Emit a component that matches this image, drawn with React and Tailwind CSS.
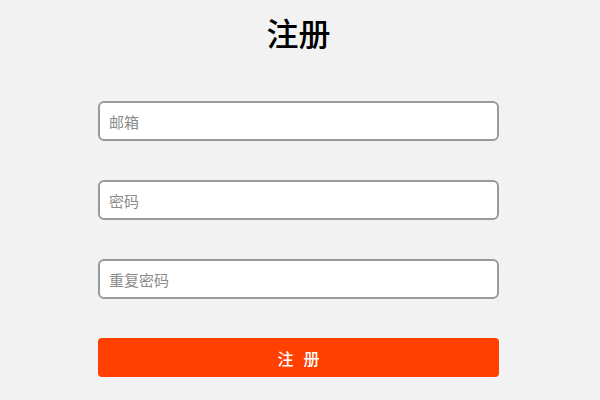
export default function App() {
  return (
    <div className="w-[600px] h-[400px] bg-[#f2f2f2] flex flex-col items-center pr-[3px] font-['Noto_Sans_CJK_SC','Noto_Sans',sans-serif]">
      <h1 className="mt-[10px] text-[32px] leading-[44px] font-medium text-black">注册</h1>
      <div className="mt-[47px] w-[401px] flex flex-col gap-[39px]">
        {["邮箱", "密码", "重复密码"].map((p) => (
          <input
            key={p}
            placeholder={p}
            type={p === "邮箱" ? "text" : "password"}
            className="h-[40px] w-full bg-white border-2 border-[#9a9a9a] rounded-[6px] px-[9px] text-[15px] placeholder:text-[#8a8a8a] outline-none font-['Noto_Sans_CJK_SC','Noto_Sans',sans-serif]"
          />
        ))}
        <button className="h-[39px] w-full bg-[#ff4000] rounded-[4px] text-white text-[16px] font-medium tracking-[10px] pl-[10px] font-['Noto_Sans_CJK_SC','Noto_Sans',sans-serif]">
          注册
        </button>
      </div>
    </div>
  );
}
